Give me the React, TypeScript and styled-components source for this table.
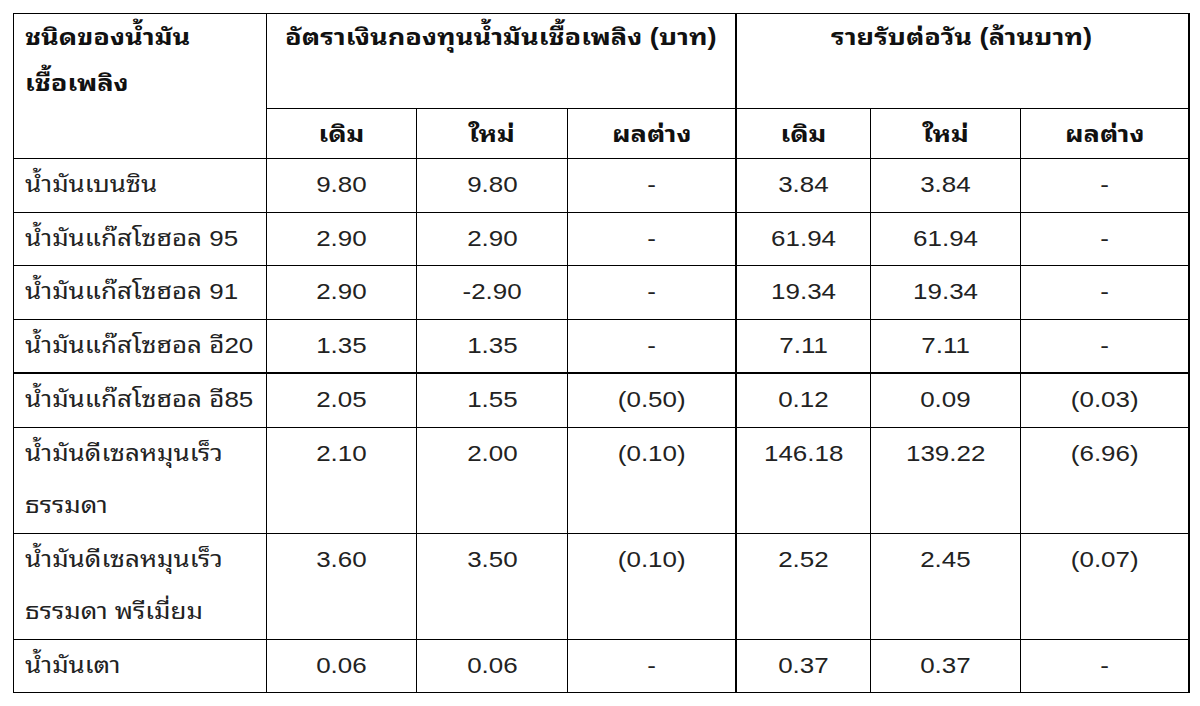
import styled, { createGlobalStyle } from 'styled-components';

// --- Estilos ---
const GlobalStyle = createGlobalStyle`
  html, body {
    margin: 0;
    padding: 0;
    background: #ffffff;
  }
  body {
    font-family: "Liberation Sans", "Noto Sans Thai Looped", "Loma", "Garuda", "Noto Sans Thai", "Noto Sans", sans-serif;
    color: #1a1a1a;
  }
`;

const Page = styled.div`
  width: 1200px;
  height: 706px;
  padding: 13px 0 0 13px;
  box-sizing: border-box;
  background: #fff;
`;

const Table = styled.table`
  border-collapse: collapse;
  table-layout: fixed;
  width: 1176px;
`;

const Th = styled.th<{ $left?: boolean; $thickRight?: boolean; $h?: number }>`
  border: 1.5px solid #000;
  border-right-width: ${({ $thickRight }) => ($thickRight ? '2.5px' : '1.5px')};
  font-weight: 700;
  font-size: 23px;
  color: #111;
  text-align: ${({ $left }) => ($left ? 'left' : 'center')};
  vertical-align: top;
  padding: ${({ $left }) => ($left ? '0 0 0 11px' : '0')};
  line-height: 46px;
  height: ${({ $h }) => $h ?? 50}px;
  box-sizing: border-box;
`;

const SubTh = styled(Th)`
  padding: 0;
  vertical-align: middle;
  line-height: 48px;
`;

const Td = styled.td<{ $left?: boolean; $thickRight?: boolean; $thickTop?: boolean }>`
  border: 1.5px solid #000;
  border-right-width: ${({ $thickRight }) => ($thickRight ? '2.5px' : '1.5px')};
  border-top-width: ${({ $thickTop }) => ($thickTop ? '2.5px' : '1.5px')};
  font-size: 22px;
  color: #222;
  text-align: ${({ $left }) => ($left ? 'left' : 'center')};
  vertical-align: top;
  padding: ${({ $left }) => ($left ? '0 0 0 11px' : '0')};
  line-height: 52.5px;
`;

const Stretch = styled.span<{ $left?: boolean }>`
  display: inline-block;
  transform: scaleX(1.18);
  transform-origin: ${({ $left }) => ($left ? 'left center' : 'center')};
  white-space: pre-line;
`;

// --- Dados ---
type Row = {
  name: string;
  rate: [string, string, string];
  income: [string, string, string];
  thickTop?: boolean;
};

const rows: Row[] = [
  { name: 'น้ำมันเบนซิน', rate: ['9.80', '9.80', '-'], income: ['3.84', '3.84', '-'] },
  { name: 'น้ำมันแก๊สโซฮอล 95', rate: ['2.90', '2.90', '-'], income: ['61.94', '61.94', '-'] },
  { name: 'น้ำมันแก๊สโซฮอล 91', rate: ['2.90', '-2.90', '-'], income: ['19.34', '19.34', '-'] },
  { name: 'น้ำมันแก๊สโซฮอล อี20', rate: ['1.35', '1.35', '-'], income: ['7.11', '7.11', '-'] },
  { name: 'น้ำมันแก๊สโซฮอล อี85', rate: ['2.05', '1.55', '(0.50)'], income: ['0.12', '0.09', '(0.03)'], thickTop: true },
  { name: 'น้ำมันดีเซลหมุนเร็ว\nธรรมดา', rate: ['2.10', '2.00', '(0.10)'], income: ['146.18', '139.22', '(6.96)'] },
  { name: 'น้ำมันดีเซลหมุนเร็ว\nธรรมดา พรีเมี่ยม', rate: ['3.60', '3.50', '(0.10)'], income: ['2.52', '2.45', '(0.07)'] },
  { name: 'น้ำมันเตา', rate: ['0.06', '0.06', '-'], income: ['0.37', '0.37', '-'] },
];

const colWidths = [253, 150, 151, 168, 135, 150, 168];

// --- Componente ---
const App = () => {
  return (
    <Page>
      <GlobalStyle />
      <Table>
        <colgroup>
          {colWidths.map((w, i) => (
            <col key={i} style={{ width: w }} />
          ))}
        </colgroup>
        <thead>
          <tr>
            <Th $left rowSpan={2} $h={95}>
              <Stretch $left>{'ชนิดของน้ำมัน\nเชื้อเพลิง'}</Stretch>
            </Th>
            <Th colSpan={3} $thickRight $h={95}>
              <Stretch>อัตราเงินกองทุนน้ำมันเชื้อเพลิง (บาท)</Stretch>
            </Th>
            <Th colSpan={3} $thickRight $h={95}>
              <Stretch>รายรับต่อวัน (ล้านบาท)</Stretch>
            </Th>
          </tr>
          <tr>
            <SubTh><Stretch>เดิม</Stretch></SubTh>
            <SubTh><Stretch>ใหม่</Stretch></SubTh>
            <SubTh $thickRight><Stretch>ผลต่าง</Stretch></SubTh>
            <SubTh><Stretch>เดิม</Stretch></SubTh>
            <SubTh><Stretch>ใหม่</Stretch></SubTh>
            <SubTh $thickRight><Stretch>ผลต่าง</Stretch></SubTh>
          </tr>
        </thead>
        <tbody>
          {rows.map((r) => (
            <tr key={r.name}>
              <Td $left $thickTop={r.thickTop}>
                <Stretch $left>{r.name}</Stretch>
              </Td>
              {r.rate.map((v, i) => (
                <Td key={'r' + i} $thickTop={r.thickTop} $thickRight={i === 2}>
                  <Stretch>{v}</Stretch>
                </Td>
              ))}
              {r.income.map((v, i) => (
                <Td key={'i' + i} $thickTop={r.thickTop} $thickRight={i === 2}>
                  <Stretch>{v}</Stretch>
                </Td>
              ))}
            </tr>
          ))}
        </tbody>
      </Table>
    </Page>
  );
};

export default App;
